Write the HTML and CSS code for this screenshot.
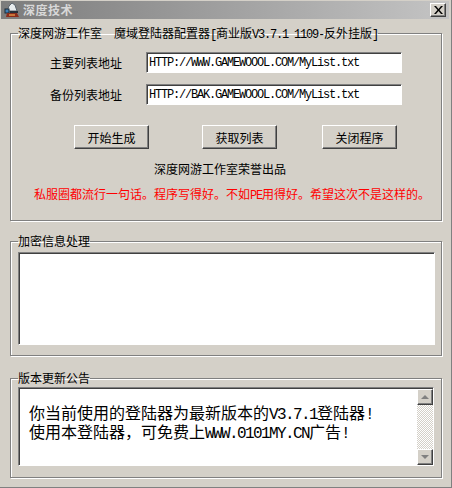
FILE: index.html
```html
<!DOCTYPE html>
<html lang="zh-CN">
<head>
    <meta charset="UTF-8">
    <title>深度技术</title>
    <link rel="stylesheet" href="styles.css">
</head>
<body>

    <div class="window">
        <div class="titlebar">
            <svg class="app-icon" width="16" height="16" viewBox="0 0 16 16">
                <path d="M3 9 L5 4 L8 1 L11 3 L13 9 Z" fill="#e8ecee" stroke="#5a646e" stroke-width="1"/>
                <rect x="1" y="7" width="4" height="4" fill="#3f7fb5" stroke="#1d2a36" stroke-width="1"/>
                <rect x="6" y="9" width="8" height="2" fill="#26303a"/>
                <path d="M3 11 H13 L15 15 H2 Z" fill="#8a2c1c"/>
                <path d="M5 12 H11 V14 H5 Z" fill="#c9763a"/>
            </svg>
            <span class="title-text">深度技术</span>
            <button class="close-btn" type="button">
                <svg width="9" height="8" viewBox="0 0 9 8"><path d="M0 0 H2 L4.500 3 L7 0 H9 L5.500 4 L9 8 H7 L4.500 5 L2 8 H0 L3.500 4 Z" fill="#000"/></svg>
            </button>
        </div>

        <div class="content">
            <fieldset class="group group-config">
                <legend>深度网游工作室<span class="half">&nbsp;&nbsp;</span>魔域登陆器配置器<span class="half">[</span>商业版<span class="half">V3.7.1 1109-</span>反外挂版<span class="half">]</span></legend>

                <div class="form-group">
                    <label for="mainlist">主要列表地址</label>
                    <input class="half" type="text" id="mainlist" value="HTTP://WWW.GAMEWOOOL.COM/MyList.txt">
                </div>
                <div class="form-group">
                    <label for="backlist">备份列表地址</label>
                    <input class="half" type="text" id="backlist" value="HTTP://BAK.GAMEWOOOL.COM/MyList.txt">
                </div>

                <div class="actions">
                    <button class="btn" type="button">开始生成</button>
                    <button class="btn" type="button">获取列表</button>
                    <button class="btn btn-close" type="button">关闭程序</button>
                </div>

                <p class="credit">深度网游工作室荣誉出品</p>
                <p class="warning">私服圈都流行一句话。程序写得好。不如<span class="half">PE</span>用得好。希望这次不是这样的。</p>
            </fieldset>

            <fieldset class="group group-crypt">
                <legend>加密信息处理</legend>
                <div class="textbox textbox-crypt"></div>
            </fieldset>

            <fieldset class="group group-notice">
                <legend>版本更新公告</legend>
                <div class="textbox textbox-notice">
                    <div class="notice-text">
                        你当前使用的登陆器为最新版本的<span class="half">V3.7.1</span>登陆器<span class="half">!</span><br>
                        使用本登陆器，可免费上<span class="half">WWW.0101MY.CN</span>广告<span class="half">!</span>
                    </div>
                    <div class="scrollbar">
                        <div class="scroll-btn"><span class="arrow-up"></span></div>
                        <div class="scroll-track"></div>
                        <div class="scroll-btn"><span class="arrow-down"></span></div>
                    </div>
                </div>
            </fieldset>
        </div>
    </div>

</body>
</html>
```

FILE: styles.css
```css
* {
    box-sizing: border-box;
}

body {
    margin: 0;
    padding: 0;
    background-color: #d4d0c8;
    color: #000;
    font-family: "Liberation Mono", "Noto Sans CJK SC", monospace;
    font-size: 12px;
}

.window {
    width: 452px;
    height: 488px;
    padding: 1px 2px 2px 1px;
    background-color: #d4d0c8;
    border-right: 1px solid #808080;
    border-bottom: 1px solid #808080;
    overflow: hidden;
}

.titlebar {
    display: flex;
    align-items: center;
    height: 18px;
    padding: 0 3px 0 3px;
    background: linear-gradient(to right, #7c7c7c, #c4c4c4);
}

.app-icon {
    flex: none;
}

.title-text {
    margin-left: 3px;
    color: #d8d8d8;
    font-weight: bold;
    letter-spacing: 0.5px;
}

.close-btn {
    display: flex;
    align-items: center;
    justify-content: center;
    width: 16px;
    height: 14px;
    margin-left: auto;
    padding: 0;
    background-color: #d4d0c8;
    border: 1px solid;
    border-color: #fff #404040 #404040 #fff;
    box-shadow: inset -1px -1px 0 #808080;
}

.content {
    display: flex;
    flex-direction: column;
    padding: 5px 8px 0 9px;
}

.group {
    width: 432px;
    margin: 0;
    padding: 0;
    border: 1px solid #808080;
    box-shadow: inset 1px 1px 0 #fff, 1px 1px 0 #fff;
}

.group legend {
    margin-left: 7px;
    padding: 4px 0 0;
    line-height: 14px;
}

.half {
    letter-spacing: -1.2px;
}

.group-config {
    height: 197px;
    padding-top: 10px;
}

.form-group {
    display: flex;
    align-items: center;
    gap: 24px;
    margin-bottom: 11px;
    padding-left: 39px;
}

.form-group label {
    flex: none;
    width: 72px;
}

.form-group input {
    width: 256px;
    height: 21px;
    padding: 0 2px;
    font-family: "Liberation Mono", monospace;
    font-size: 12px;
    color: #000;
    background-color: #fff;
    border: 1px solid;
    border-color: #808080 #fff #fff #808080;
    box-shadow: inset 1px 1px 0 #404040;
    outline: none;
}

.actions {
    display: flex;
    gap: 53px;
    margin-top: 20px;
    padding-left: 63px;
}

.btn {
    width: 75px;
    height: 24px;
    padding: 0;
    font-family: "Noto Sans CJK SC", sans-serif;
    font-size: 12px;
    color: #000;
    background-color: #d4d0c8;
    border: 1px solid;
    border-color: #fff #404040 #404040 #fff;
    box-shadow: inset -1px -1px 0 #808080;
}

.btn-close {
    margin-left: -8px;
}

.credit,
.warning {
    margin: 0;
    text-align: center;
    line-height: 16px;
}

.credit {
    margin-top: 14px;
    padding-right: 12px;
}

.warning {
    margin-top: 9px;
    padding-left: 12px;
    color: #f00;
}

.group-crypt {
    height: 124px;
    margin-top: 11px;
    padding: 2px 6px 0 7px;
}

.group-crypt legend,
.group-notice legend {
    margin-left: 0;
}

.textbox {
    background-color: #fff;
    border: 1px solid;
    border-color: #808080 #fff #fff #808080;
    box-shadow: inset 1px 1px 0 #404040;
}

.textbox-crypt {
    height: 93px;
}

.group-notice {
    height: 109px;
    margin-top: 13px;
    padding: 0 7px 0 7px;
}

.textbox-notice {
    display: flex;
    justify-content: space-between;
    height: 79px;
}

.notice-text {
    padding: 18px 0 0 10px;
    font-size: 16px;
    line-height: 19px;
}

.notice-text .half {
    letter-spacing: -1.6px;
}

.scrollbar {
    display: flex;
    flex-direction: column;
    flex: none;
    width: 16px;
    margin: 1px 0 0;
}

.scroll-btn {
    display: flex;
    align-items: center;
    justify-content: center;
    flex: none;
    height: 16px;
    background-color: #d4d0c8;
    border: 1px solid;
    border-color: #fff #404040 #404040 #fff;
    box-shadow: inset -1px -1px 0 #808080;
}

.scroll-track {
    flex: 1;
    background-color: #fff;
    background-image: repeating-conic-gradient(#d4d0c8 0 25%, #fff 0 50%);
    background-size: 2px 2px;
}

.arrow-up,
.arrow-down {
    width: 0;
    height: 0;
    border-left: 4px solid transparent;
    border-right: 4px solid transparent;
}

.arrow-up {
    border-bottom: 4px solid #808080;
}

.arrow-down {
    border-top: 4px solid #808080;
}
```
